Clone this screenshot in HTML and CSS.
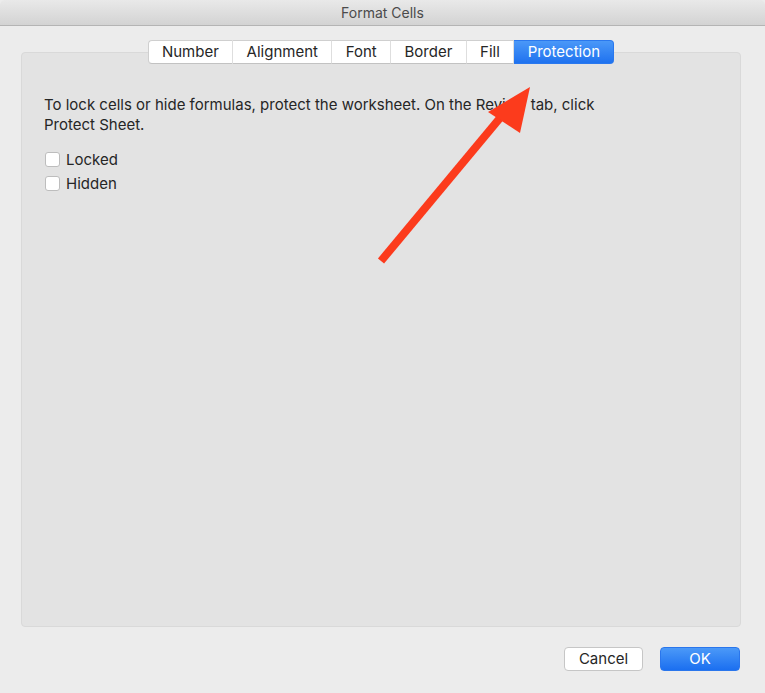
FILE: index.html
```html
<!DOCTYPE html>
<html>
<head>
<meta charset="utf-8">
<title>Format Cells</title>
<link rel="stylesheet" href="styles.css">
</head>
<body>
<div class="window">
  <div class="titlebar">Format Cells</div>
  <div class="content">
    <div class="tabs">
      <div class="tab">Number</div>
      <div class="tab">Alignment</div>
      <div class="tab">Font</div>
      <div class="tab">Border</div>
      <div class="tab">Fill</div>
      <div class="tab active">Protection</div>
    </div>
    <div class="panel">
      <p class="info">To lock cells or hide formulas, protect the worksheet. On the Review tab, click Protect Sheet.</p>
      <div class="checks">
        <label class="check"><span class="box"></span>Locked</label>
        <label class="check"><span class="box"></span>Hidden</label>
      </div>
    </div>
    <div class="buttons">
      <div class="btn">Cancel</div>
      <div class="btn primary">OK</div>
    </div>
  </div>
  <svg class="arrow" width="765" height="693" viewBox="0 0 765 693">
    <defs>
      <filter id="sh" x="-20%" y="-20%" width="140%" height="140%">
        <feGaussianBlur stdDeviation="0.6"/>
      </filter>
    </defs>
    <g filter="url(#sh)">
      <line x1="381" y1="261" x2="500" y2="118" stroke="#fc3a1f" stroke-width="8" stroke-linecap="butt"/>
      <polygon points="530,87 488,112 520,133" fill="#fc3a1f"/>
    </g>
  </svg>
</div>
</body>
</html>
```
FILE: styles.css
```css
html, body {
  margin: 0;
  padding: 0;
  background: #ececec;
}
.window {
  position: relative;
  width: 765px;
  height: 693px;
  background: #ececec;
  font-family: Inter, "Liberation Sans", Arial, sans-serif;
  color: #262626;
  overflow: hidden;
}
.titlebar {
  height: 25px;
  line-height: 26px;
  text-align: center;
  font-size: 14px;
  color: #4b4b4b;
  background: linear-gradient(#e9e9e9, #d3d3d3);
  border-bottom: 1px solid #b4b4b4;
  border-radius: 5px 5px 0 0;
}
.content {
  padding: 14px 24px 0 21px;
}
.tabs {
  position: relative;
  z-index: 1;
  display: flex;
  justify-content: center;
  height: 24px;
}
.tab {
  height: 22px;
  line-height: 22px;
  padding: 0 13.4px;
  font-size: 15px;
  background: #ffffff;
  border-top: 1px solid #cfcfcf;
  border-bottom: 1px solid #c2c2c2;
  border-right: 1px solid #dedede;
  color: #262626;
}
.tab:first-child {
  border-left: 1px solid #cfcfcf;
  border-radius: 4px 0 0 4px;
}
.tab:last-child {
  border-radius: 0 4px 4px 0;
  border-right: 1px solid #cfcfcf;
}
.tab.active {
  background: linear-gradient(#4a98f8, #1f72ef);
  color: #ffffff;
  border-color: #2a78ee;
}
.panel {
  margin-top: -12px;
  height: 573px;
  background: #e3e3e3;
  border: 1px solid #d9d9d9;
  border-radius: 4px;
  padding: 0 22px;
  box-sizing: content-box;
}
.info {
  margin: 42px 0 0 0;
  font-size: 15px;
  line-height: 20px;
  width: 570px;
}
.checks {
  margin-top: 12px;
  display: flex;
  flex-direction: column;
}
.check {
  display: flex;
  align-items: center;
  height: 24px;
  font-size: 15px;
}
.box {
  width: 15px;
  height: 15px;
  margin-left: 1px;
  margin-right: 6px;
  background: #ffffff;
  border: 1px solid #bdbdbd;
  border-radius: 3px;
  box-sizing: border-box;
}
.buttons {
  display: flex;
  justify-content: flex-end;
  gap: 17px;
  margin-top: 20px;
  padding-right: 1px;
}
.btn {
  width: 77px;
  height: 22px;
  line-height: 22px;
  text-align: center;
  font-size: 15px;
  background: #ffffff;
  border: 1px solid #c6c6c6;
  border-radius: 4px;
  box-sizing: content-box;
  color: #262626;
}
.btn.primary {
  width: 78px;
  background: linear-gradient(#4b99f8, #1b6ff0);
  border-color: #2a76ec;
  color: #ffffff;
}
.arrow {
  position: absolute;
  left: 0;
  top: 0;
  pointer-events: none;
}
```
